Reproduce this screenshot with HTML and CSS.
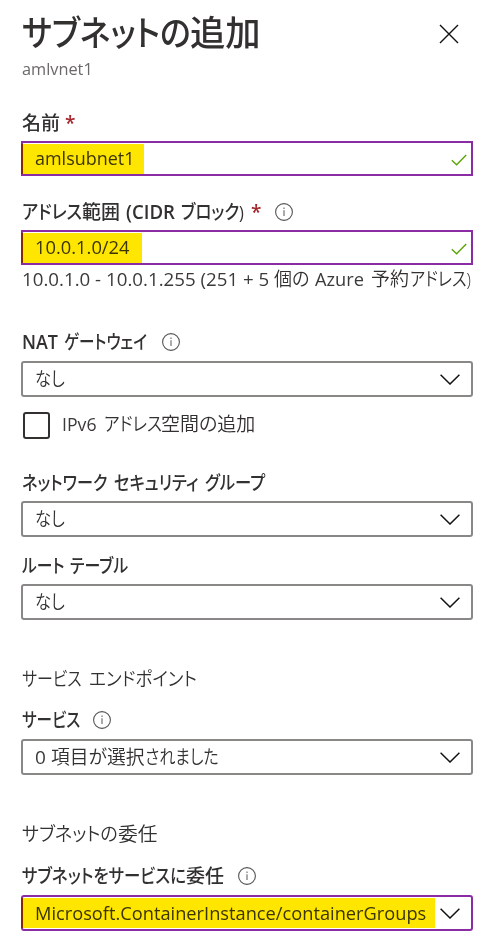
FILE: index.html
```html
<!DOCTYPE html>
<html lang="ja">
<head>
<meta charset="utf-8">
<title>サブネットの追加</title>
<link rel="stylesheet" href="styles.css">
</head>
<body>
<svg class="defs" aria-hidden="true">
  <symbol id="info" viewBox="0 0 18 18"><circle cx="9" cy="9" r="8.4" fill="none" stroke="#555" stroke-width="1.1"/><path d="M9 7.2v5.8M9 4.6v1.4" fill="none" stroke="#666" stroke-width="1.1"/></symbol>
  <symbol id="check" viewBox="0 0 16 12"><path d="M.8 6.2 5.6 10.8 15.2 1" fill="none" stroke="#57a300" stroke-width="1.3"/></symbol>
  <symbol id="chevron" viewBox="0 0 20 11"><path d="M.6.8 10 10 19.4.8" fill="none" stroke="#111" stroke-width="1.5"/></symbol>
</svg>
<main class="panel">
  <header class="header">
    <h1 class="title"><span class="run title-kana">サブネットの</span><span class="run title-kanji">追加</span></h1>
    <button class="close" aria-label="閉じる"><svg width="20" height="20" viewBox="0 0 20 20"><path d="M1 1 19 19M19 1 1 19" fill="none" stroke="#111" stroke-width="1.4"/></svg></button>
  </header>
  <p class="subtitle">amlvnet1</p>

  <section class="field name">
    <label class="label"><span class="run name-text">名前</span><span class="required">*</span></label>
    <div class="input"><span class="run latin value-name">amlsubnet1</span><svg class="check"><use href="#check"/></svg><i class="mark mark-name"></i></div>
  </section>

  <section class="field range">
    <label class="label"><span class="run range-a">アドレス</span><span class="run range-b">範囲</span><span class="run range-c">(CIDR</span><span class="run range-d">ブロック)</span><span class="required">*</span><svg class="info"><use href="#info"/></svg></label>
    <div class="input"><span class="run latin value-range">10.0.1.0/24</span><svg class="check"><use href="#check"/></svg><i class="mark mark-range"></i></div>
    <p class="hint"><span class="run latin hint-a">10.0.1.0 - 10.0.1.255 (251 + 5</span><span class="run hint-b">個の</span><span class="run latin hint-c">Azure</span><span class="run hint-d">予約</span><span class="run hint-e">アドレス)</span></p>
  </section>

  <section class="field nat">
    <label class="label"><span class="run nat-a">NAT</span><span class="run nat-b">ゲートウェイ</span><svg class="info"><use href="#info"/></svg></label>
    <div class="select"><span class="run none">なし</span><svg class="chevron"><use href="#chevron"/></svg></div>
    <label class="option"><span class="box"></span><span class="run latin ip-a">IPv6</span><span class="run ip-b">アドレス</span><span class="run ip-c">空間の追加</span></label>
  </section>

  <section class="field nsg">
    <label class="label"><span class="run nsg-a">ネットワーク</span><span class="run nsg-b">セキュリティ</span><span class="run nsg-c">グループ</span></label>
    <div class="select"><span class="run none">なし</span><svg class="chevron"><use href="#chevron"/></svg></div>
  </section>

  <section class="field route">
    <label class="label"><span class="run route-a">ルート</span><span class="run route-b">テーブル</span></label>
    <div class="select"><span class="run none">なし</span><svg class="chevron"><use href="#chevron"/></svg></div>
  </section>

  <section class="field group">
    <h2 class="heading"><span class="run end-a">サービス</span><span class="run end-b">エンドポイント</span></h2>
    <label class="label"><span class="run service">サービス</span><svg class="info"><use href="#info"/></svg></label>
    <div class="select"><span class="run latin zero">0</span><span class="run sel-a">項目が選択</span><span class="run sel-b">されました</span><svg class="chevron"><use href="#chevron"/></svg></div>
  </section>

  <section class="field group delegation">
    <h2 class="heading"><span class="run del-a">サブネットの</span><span class="run del-k">委任</span></h2>
    <label class="label"><span class="run del-b">サブネットをサービスに</span><span class="run del-c">委任</span><svg class="info"><use href="#info"/></svg></label>
    <div class="select active"><span class="run latin value-delegation">Microsoft.ContainerInstance/containerGroups</span><svg class="chevron"><use href="#chevron"/></svg><i class="mark mark-delegation"></i></div>
  </section>
</main>
</body>
</html>
```
FILE: styles.css
```css
* { box-sizing: border-box; }
body {
  margin: 0;
  background: #fff;
  color: #323130;
  font: 350 19px/26px "Open Sans", "Noto Sans CJK JP", sans-serif;
  font-feature-settings: "palt";
}
.defs { position: absolute; width: 0; height: 0; }
h1, h2, p { margin: 0; font: inherit; }
.panel { padding: 10px 20px 0 21px; }

.run { flex: none; white-space: nowrap; transform-origin: 0 50%; }
.latin { font-weight: 400; color: #3b3a39; }

.header { display: flex; justify-content: space-between; height: 46px; }
.title { display: flex; padding-left: 1px; font-size: 35px; line-height: 46px; font-weight: 500; }
.title-kana { width: 168px; scale: .91 1; }
.title-kanji { scale: 1.01 1; }
.close { margin: 14px 14px 0 0; padding: 0; width: 20px; height: 20px; border: 0; background: none; }
.close svg { display: block; }
.subtitle { padding-left: 1px; font-size: 17px; font-weight: 400; color: #6b6967; transform-origin: 0 50%; scale: .96 1; }

.label, .hint, .heading { display: flex; align-items: baseline; height: 26px; padding-left: 1px; }
.label { font-weight: 500; margin-bottom: 6px; }
.required { width: 9px; color: #a4262c; font-weight: 600; }
.info { width: 18px; height: 18px; align-self: center; flex: none; }
.required + .info { margin-left: 15px; }

.input, .select { position: relative; display: flex; align-items: center; padding-left: 12px; }
.input { height: 35px; border: 2px solid #8a2da5; }
.input .run { margin-top: -2px; }
.select { height: 36px; border: 2px solid #8a8886; border-radius: 3px; }
.select.active { border-color: #8a2da5; }
.check { width: 16px; height: 12px; margin: 2px 4px 0 auto; }
.chevron { width: 20px; height: 11px; margin: 0 11px 0 auto; }
.mark { position: absolute; left: -2px; height: 30px; background: #ffe600; mix-blend-mode: multiply; }
.mark-name { top: 1px; width: 123px; }
.mark-range { top: 1px; width: 121px; }
.mark-delegation { top: 1px; width: 414px; }

.name { margin-top: 28px; }
.name .label, .range .label { margin-bottom: 5px; }
.name-text { width: 43px; }
.value-name { scale: .945 1; }

.range { margin-top: 23px; }
.range-a { width: 60px; scale: .9 1; }
.range-b { width: 44px; }
.range-c { width: 55px; scale: .98 1; font-weight: 550; }
.range-d { width: 70px; scale: .865 1; }
.value-range { scale: .965 1; }
.hint { margin-top: 1px; }
.hint-a { width: 252px; scale: .985 1; }
.hint-b { width: 41px; scale: .95 1; }
.hint-c { width: 56px; scale: .96 1; }
.hint-d { width: 39px; }
.hint-e { scale: .85 1; }

.nat { margin-top: 37px; }
.nat-a { width: 42px; scale: .94 1; font-weight: 600; }
.nat-b { width: 98px; scale: .82 1; }
.none { scale: .86 1; }
.option { display: flex; align-items: center; height: 27px; margin-top: 15px; padding-left: 2px; }
.option .run { margin-top: -3px; }
.box { width: 27px; height: 27px; margin-right: 12px; border: 2px solid #323130; border-radius: 3px; }
.ip-a { width: 42px; scale: .93 1; }
.ip-b { width: 57px; scale: .87 1; }

.nsg { margin-top: 31px; }
.nsg .label, .route .label { margin-bottom: 5px; }
.nsg-a { width: 92px; scale: .85 1; }
.nsg-b { width: 91px; scale: .86 1; }
.nsg-c { scale: .86 1; }

.route { margin-top: 16px; }
.route-a { width: 48px; scale: .83 1; }
.route-b { scale: .84 1; }

.group { margin-top: 46px; }
.heading { margin-bottom: 15px; }
.end-a { width: 67px; scale: .84 1; }
.end-b { scale: .925 1; }
.service { width: 71px; scale: .82 1; }
.zero { width: 16px; }
.sel-a { width: 94px; scale: .99 1; }
.sel-b { scale: .84 1; }

.delegation .heading { margin-bottom: 16px; }
.del-a { width: 96px; scale: .95 1; }
.del-k { scale: 1.04 1; }
.del-b { width: 164px; scale: .866 1; }
.del-c { width: 52px; }
.value-delegation { scale: .96 1; margin-right: -30px; }
```
